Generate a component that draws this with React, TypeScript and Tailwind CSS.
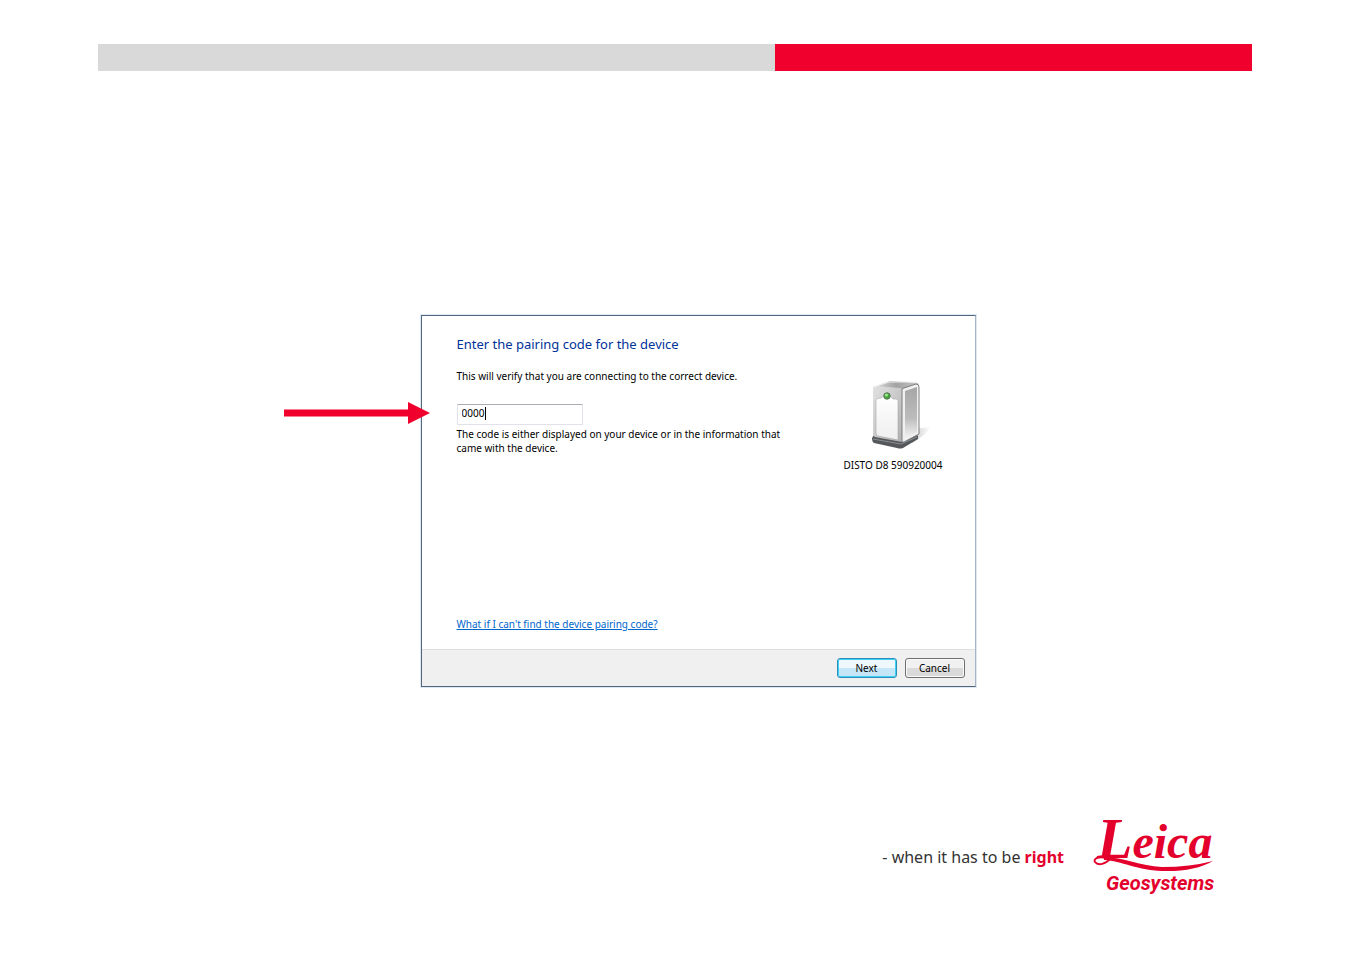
import React from "react";

function Arrow() {
  return (
    <svg
      className="absolute bottom-px right-full mr-[27px] h-[22px] w-[146px]"
      viewBox="0 0 146 22"
      aria-hidden="true"
    >
      <path d="M0 7.5H124V0L146 11L124 22V14.5H0Z" fill="#f0002d" />
    </svg>
  );
}

function DeviceIcon() {
  return (
    <svg className="h-[76px] w-[76px]" viewBox="-7 0 76 76" aria-hidden="true">
      <defs>
        <linearGradient id="front" x1="0" y1="0" x2="1" y2="1">
          <stop offset="0" stopColor="#e2e2e2" />
          <stop offset="1" stopColor="#b0b0b0" />
        </linearGradient>
        <linearGradient id="panel" x1="0" y1="0" x2="0" y2="1">
          <stop offset="0" stopColor="#ffffff" />
          <stop offset="1" stopColor="#eeeeee" />
        </linearGradient>
        <linearGradient id="side" x1="0" y1="0" x2="0" y2="1">
          <stop offset="0" stopColor="#a6a6a6" />
          <stop offset="0.6" stopColor="#bcbcbc" />
          <stop offset="1" stopColor="#f6f6f6" />
        </linearGradient>
        <linearGradient id="top" x1="0" y1="0" x2="1" y2="0">
          <stop offset="0" stopColor="#e0e0e0" />
          <stop offset="0.5" stopColor="#a2a2a2" />
          <stop offset="1" stopColor="#c4c4c4" />
        </linearGradient>
        <linearGradient id="shadow" x1="0" y1="0" x2="1" y2="0">
          <stop offset="0" stopColor="#a8a8a8" />
          <stop offset="1" stopColor="#ffffff" />
        </linearGradient>
      </defs>
      <path d="M52 53L69 51Q64 59 50 67Z" fill="url(#shadow)" opacity="0.6" />
      <path d="M10 62L12 59L41 64L54 58L56 60V63L41 72Q38 73 35 72L12 67Q10 66 10 62Z" fill="#55585a" />
      <path d="M11 63L39 68L55 61" fill="none" stroke="#8b8e90" strokeWidth="1" />
      <path d="M11 11L28 5L56 7L57 10L40 14Z" fill="url(#top)" />
      <path d="M11 12Q11 10 13 10L38 12Q40 12 40 14V66L13 61Q11 60 11 58Z" fill="url(#front)" />
      <path d="M40 14Q40 12 42 12L54 8Q57 8 57 11V58L42 66H40Z" fill="#f0f0f0" stroke="#7c7e80" strokeWidth="1" />
      <path d="M43 15L55 11V56L43 63Z" fill="url(#side)" />
      <path d="M14 24Q15 22 19 22L22 20H28L31 23H34Q36 23 36 25V64L16 60Q14 59 14 57Z" fill="url(#panel)" stroke="#9a9a9a" strokeWidth="0.5" />
      <path d="M12 11L27 6H55" fill="none" stroke="#eeeeee" strokeWidth="1" />
      <circle cx="25" cy="20" r="3.2" fill="#43a837" stroke="#55705a" strokeWidth="1" />
      <circle cx="24.4" cy="19" r="1.5" fill="#a5ee8c" />
    </svg>
  );
}

function LeicaLogo() {
  return (
    <svg
      className="h-[80px] w-[122px] overflow-visible"
      viewBox="0 0 122 80"
      role="img"
      aria-label="Leica Geosystems"
      fill="#e4002c"
    >
      <text x="5" y="43" fontFamily="'Liberation Serif', serif" fontStyle="italic" fontWeight="700" fontSize="48">
        <tspan fontSize="58">L</tspan>eica
      </text>
      <path d="M14 43C6 41 1 44 3 47C6 51 14 49 18 44" fill="none" stroke="#e4002c" strokeWidth="2" strokeLinecap="round" />
      <path d="M12 42C32 42 48 51 70 52Q98 52 121 46Q102 57 70 56C44 55 30 46 12 45Z" />
      <text x="14" y="75" fontFamily="Roboto, sans-serif" fontStyle="italic" fontWeight="700" fontSize="20">
        Geosystems
      </text>
    </svg>
  );
}

function PairingDialog() {
  return (
    <form
      onSubmit={(e) => e.preventDefault()}
      className="w-[555px] border border-[#53667d] border-r-[#a5b5c5] bg-white font-['Noto_Sans',sans-serif] text-[10px] leading-[14px] text-black shadow-[0_0_0_1px_#dde8f3]"
    >
      <div className="flex h-[333px] justify-between pl-[35px] pr-8 pt-5">
        <div className="flex flex-col items-start pb-[18px]">
          <h1 className="text-[13px] leading-4 text-[#003399]">Enter the pairing code for the device</h1>
          <label htmlFor="code" className="mt-[17px]">
            This will verify that you are connecting to the correct device.
          </label>
          <div className="relative mt-[21px]">
            <Arrow />
            <input
              id="code"
              type="text"
              defaultValue="0000"
              className="block h-[21px] w-[126px] rounded-[1px] border border-[#e2e3ea] border-t-[#abadb3] px-1 pb-[3px] outline-none"
            />
            {/* text cursor */}
            <span className="absolute left-7 top-[3px] h-[13px] w-px bg-black" />
          </div>
          <p className="mt-[2px] w-[340px]">
            The code is either displayed on your device or in the information that came with the device.
          </p>
          <a href="#help" className="mt-auto text-[#0066cc] underline">
            What if I can't find the device pairing code?
          </a>
        </div>
        <div className="mt-10 flex flex-col items-center gap-[6px]">
          <DeviceIcon />
          <span className="whitespace-nowrap">DISTO D8 590920004</span>
        </div>
      </div>
      <div className="flex justify-end gap-2 border-t border-[#dfdfdf] bg-[#f0f0f0] px-[10px] py-2">
        <button
          type="submit"
          className="h-5 w-[60px] rounded-[3px] border border-[#2c8fb8] bg-linear-to-b from-[#eef8fd] from-50% to-[#c5e6f6] to-50% shadow-[inset_0_0_0_1px_#3fd0f8]"
        >
          Next
        </button>
        <button
          type="button"
          className="h-5 w-[60px] rounded-[3px] border border-[#707070] bg-linear-to-b from-[#f1f1f1] from-50% to-[#dadada] to-50% shadow-[inset_0_0_0_1px_#fafafa]"
        >
          Cancel
        </button>
      </div>
    </form>
  );
}

export default function App() {
  return (
    <div className="min-h-screen bg-white pl-[98px] pr-[99px] pt-11">
      <header className="flex h-[27px]">
        <div className="grow-[677] bg-[#d9d9d9]" />
        <div className="grow-[477] bg-[#f0002d]" />
      </header>
      <main className="mt-[244px] flex justify-center pl-[46px]">
        <PairingDialog />
      </main>
      <footer className="mt-[128px] flex items-center justify-end gap-7 pr-[38px]">
        <p className="pt-1 font-['Noto_Sans',sans-serif] text-base text-[#333333]">
          - when it has to be <b className="text-[#e4002c]">right</b>
        </p>
        <LeicaLogo />
      </footer>
    </div>
  );
}
